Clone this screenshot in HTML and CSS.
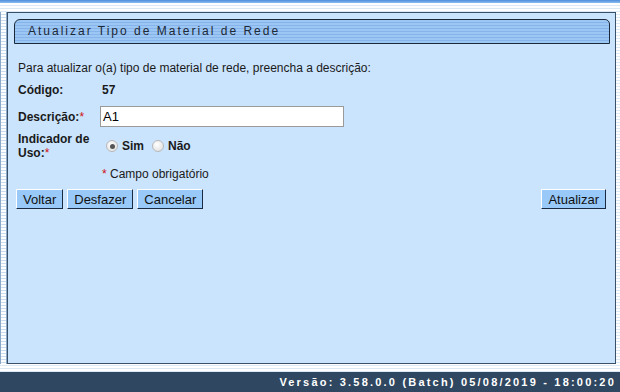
FILE: index.html
```html
<!DOCTYPE html>
<html lang="pt">
<head>
<meta charset="utf-8">
<title>Atualizar Tipo de Material de Rede</title>
<link rel="stylesheet" href="styles.css">
</head>
<body>
<div class="topbar"></div>
<div class="page">
  <div class="leftrail"></div>
  <div class="panel">
    <div class="titlebar">Atualizar Tipo de Material de Rede</div>
    <div class="form">
      <p class="intro">Para atualizar o(a) tipo de material de rede, preencha a descrição:</p>
      <div class="row code-row">
        <span class="label">Código:</span>
        <span class="value">57</span>
      </div>
      <div class="row desc-row">
        <span class="label">Descrição:<span class="req">*</span></span>
        <input class="text-input" type="text" value="A1">
      </div>
      <div class="row use-row">
        <span class="label">Indicador de<br>Uso:<span class="req">*</span></span>
        <span class="radios">
          <label class="radio"><input type="radio" name="uso" checked><span>Sim</span></label>
          <label class="radio"><input type="radio" name="uso"><span>Não</span></label>
        </span>
      </div>
      <div class="row note-row">
        <span class="label"></span>
        <span class="note"><span class="req">*</span> Campo obrigatório</span>
      </div>
      <div class="actions">
        <div class="btn-group">
          <button class="btn" type="button">Voltar</button>
          <button class="btn" type="button">Desfazer</button>
          <button class="btn" type="button">Cancelar</button>
        </div>
        <button class="btn" type="button">Atualizar</button>
      </div>
    </div>
  </div>
</div>
<div class="footer">Versão: 3.58.0.0 (Batch) 05/08/2019 - 18:00:20</div>
</body>
</html>
```
FILE: styles.css
```css
html, body {
  margin: 0;
  padding: 0;
}
body {
  width: 620px;
  height: 392px;
  overflow: hidden;
  font-family: "Liberation Sans", Arial, sans-serif;
  font-size: 12px;
  color: #1a1a1a;
  background: repeating-linear-gradient(to bottom, #ffffff 0, #ffffff 2px, #dbe8f6 2px, #dbe8f6 3px);
}
.topbar {
  height: 3px;
  background: linear-gradient(to bottom, #4d8fdc, #8cbcf0);
  border-bottom: 1px solid #ffffff;
}
.page {
  display: flex;
  height: 360px;
  padding-top: 8px;
  box-sizing: border-box;
  padding-right: 4px;
}
.leftrail {
  width: 7px;
  border-left: 1px solid #8aa8c8;
  border-right: 1px solid #8aa8c8;
  box-sizing: border-box;
  background: repeating-linear-gradient(to bottom, #ffffff 0, #ffffff 2px, #c9dcf0 2px, #c9dcf0 3px);
}
.panel {
  flex: 1;
  background: #cbe4fd;
  border: 1px solid #3a5068;
  padding: 6px 5px 0 6px;
}
.titlebar {
  height: 23px;
  line-height: 23px;
  border: 1px solid #1b2a3a;
  border-radius: 6px 5px 0 0;
  padding-left: 13px;
  font-size: 12px;
  letter-spacing: 2px;
  color: #1c2836;
  background: repeating-linear-gradient(to bottom, #9cc6f4 0, #9cc6f4 2px, #86b4ea 2px, #86b4ea 3px);
}
.form {
  padding: 0 4px;
}
.intro {
  margin: 17px 0 0;
  line-height: 14px;
}
.row {
  display: grid;
  grid-template-columns: 84px 1fr;
  align-items: center;
}
.label {
  font-weight: bold;
  line-height: 14px;
}
.value {
  font-weight: bold;
}
.req {
  color: #d01010;
  font-weight: normal;
}
.code-row {
  margin-top: 8px;
  line-height: 14px;
}
.desc-row {
  margin-top: 9px;
}
.text-input {
  width: 244px;
  height: 21px;
  box-sizing: border-box;
  margin: 0 0 0 -2px;
  border: 1px solid #9a9a9a;
  background: #ffffff;
  padding: 0 2px;
  font-family: "Liberation Sans", Arial, sans-serif;
  font-size: 13px;
  color: #000;
}
.use-row {
  margin-top: 5px;
}
.radios {
  display: flex;
  align-items: center;
  padding-left: 4px;
  gap: 8px;
}
.radio {
  display: flex;
  align-items: center;
  gap: 4px;
  font-weight: bold;
}
.radio input {
  appearance: none;
  -webkit-appearance: none;
  width: 12px;
  height: 12px;
  margin: 0;
  border-radius: 50%;
  border: 1px solid #b8b8b8;
  background: radial-gradient(circle at 40% 35%, #ffffff 0, #e6e6e6 70%, #d4d4d4 100%);
  box-sizing: border-box;
  position: relative;
}
.radio input:checked::after {
  content: "";
  position: absolute;
  left: 2.5px;
  top: 2.5px;
  width: 5px;
  height: 5px;
  border-radius: 50%;
  background: #555555;
}
.note-row {
  margin-top: 7px;
  line-height: 14px;
}
.actions {
  display: flex;
  justify-content: space-between;
  margin-top: 8px;
  padding-right: 0;
}
.btn-group {
  display: flex;
  gap: 4px;
  margin-left: -2px;
}
.btn {
  height: 20px;
  padding: 0 6px;
  font-family: "Liberation Sans", Arial, sans-serif;
  font-size: 13px;
  color: #111;
  background: #99c9f8;
  border: 1px solid;
  border-color: #ffffff #1a2a40 #1a2a40 #ffffff;
  line-height: 17px;
}
.footer {
  margin-top: 8px;
  height: 20px;
  background: #2f4760;
  color: #ffffff;
  font-weight: bold;
  font-size: 11px;
  letter-spacing: 2.2px;
  text-align: right;
  line-height: 20px;
  padding-right: 4px;
}
```
